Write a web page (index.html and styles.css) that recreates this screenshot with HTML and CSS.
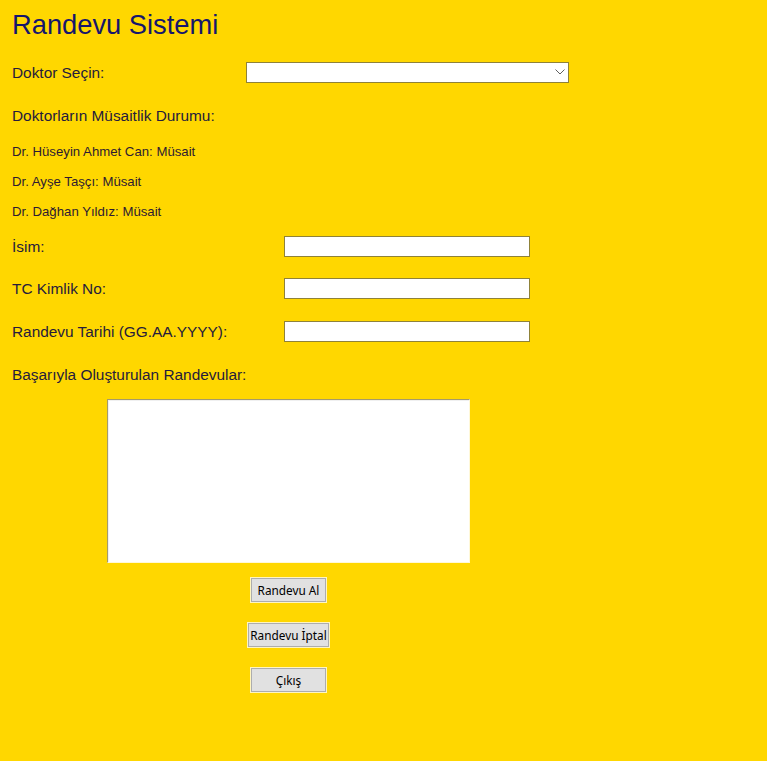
FILE: index.html
```html
<!DOCTYPE html>
<html lang="tr">
<head>
<meta charset="utf-8">
<title>Randevu Sistemi</title>
<link rel="stylesheet" href="styles.css">
</head>
<body>
<div class="app">
  <div class="row row-title"><h1 class="title">Randevu Sistemi</h1></div>

  <div class="row row-doktor">
    <span class="label label-select">Doktor Seçin:</span>
    <div class="combo" role="combobox" aria-label="Doktor Seçin">
      <svg class="chevron" width="10" height="6" viewBox="0 0 10 6"><path d="M0.5 0.5 L5 5 L9.5 0.5" fill="none" stroke="#606060" stroke-width="1"/></svg>
    </div>
  </div>

  <div class="row row-musait"><span class="label">Doktorların Müsaitlik Durumu:</span></div>

  <div class="row row-dr"><span class="dr">Dr. Hüseyin Ahmet Can: Müsait</span></div>
  <div class="row row-dr"><span class="dr">Dr. Ayşe Taşçı: Müsait</span></div>
  <div class="row row-dr"><span class="dr">Dr. Dağhan Yıldız: Müsait</span></div>

  <div class="row row-isim">
    <span class="label label-input">İsim:</span>
    <input class="field" type="text" aria-label="İsim">
  </div>
  <div class="row row-tc">
    <span class="label label-input">TC Kimlik No:</span>
    <input class="field" type="text" aria-label="TC Kimlik No">
  </div>
  <div class="row row-tarih">
    <span class="label label-input">Randevu Tarihi (GG.AA.YYYY):</span>
    <input class="field" type="text" aria-label="Randevu Tarihi">
  </div>

  <div class="row row-basari"><span class="label">Başarıyla Oluşturulan Randevular:</span></div>

  <div class="lower">
    <div class="listbox"></div>
    <div class="buttons">
      <button class="btn">Randevu Al</button>
      <button class="btn btn-wide">Randevu İptal</button>
      <button class="btn">Çıkış</button>
    </div>
  </div>
</div>
</body>
</html>
```
FILE: styles.css
```css
html, body {
  margin: 0;
  padding: 0;
  background: #ffd700;
}

body {
  font-family: "Liberation Sans", Arial, sans-serif;
  color: #261b3c;
  min-height: 761px;
}

.app {
  padding-left: 12px;
}

.row {
  display: flex;
  align-items: center;
}

.row-title { height: 50px; }
.row-doktor { height: 44px; }
.row-musait { height: 42px; }
.row-dr { height: 30px; }
.row-isim { height: 40px; }
.row-tc { height: 44px; }
.row-tarih { height: 42px; }
.row-basari { height: 44px; }

.title {
  margin: 0;
  font-weight: normal;
  font-size: 27.3px;
  color: #16166c;
  line-height: 1;
}

.label {
  font-size: 15.4px;
  line-height: 1;
  padding-top: 2px;
}

.label-select { width: 234px; }
.label-input { width: 272px; }

.dr {
  font-size: 13.2px;
  line-height: 1;
  padding-top: 2px;
  color: #2d1a32;
}

.combo {
  box-sizing: border-box;
  width: 323px;
  height: 21px;
  background: #fff;
  border: 1px solid #8f8239;
  display: flex;
  align-items: center;
  justify-content: flex-end;
  padding-right: 3px;
}

.chevron { display: block; }

.field {
  box-sizing: border-box;
  width: 246px;
  height: 21px;
  margin: 0;
  padding: 0 2px;
  background: #fff;
  border: 1px solid #8f8239;
  border-radius: 0;
  outline: none;
  font: 13px "Liberation Sans", Arial, sans-serif;
}

.lower {
  margin-left: 95px;
  width: 363px;
  padding-top: 3px;
  display: flex;
  flex-direction: column;
  align-items: center;
}

.listbox {
  box-sizing: border-box;
  width: 363px;
  height: 164px;
  background: #fff;
  border-top: 1px solid #a49a6a;
  border-left: 1px solid #a49a6a;
  border-right: 1px solid #fff8d8;
  border-bottom: 1px solid #fff8d8;
  box-shadow: inset 1px 1px 0 #f0f0f0;
}

.buttons {
  display: flex;
  flex-direction: column;
  align-items: center;
  gap: 21px;
  margin-top: 15px;
}

.btn {
  box-sizing: border-box;
  width: 75px;
  height: 24px;
  margin: 0;
  padding: 0;
  background: #e1e1e1;
  border: 1px solid #adadad;
  outline: 1px solid #fff5c0;
  border-radius: 0;
  font: 11.8px "Noto Sans", "Open Sans", sans-serif;
  color: #000;
  line-height: 20px;
}

.btn-wide { width: 81px; }
```
